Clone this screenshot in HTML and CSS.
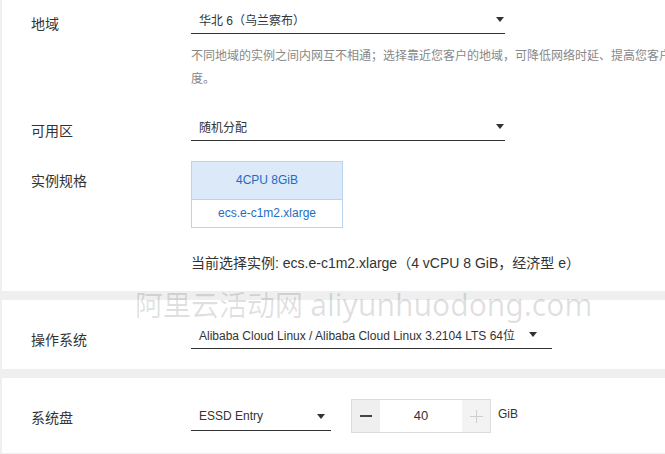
FILE: index.html
```html
<!DOCTYPE html>
<html lang="zh-CN">
<head>
<meta charset="utf-8">
<title>ECS</title>
<link rel="stylesheet" href="styles.css">
</head>
<body>
<div class="page">
  <section class="card card--first">
    <div class="row">
      <div class="label">地域</div>
      <div class="field">
        <div class="select select--region"><span>华北 6（乌兰察布）</span><i class="caret"></i></div>
        <p class="desc">不同地域的实例之间内网互不相通；选择靠近您客户的地域，可降低网络时延、提高您客户访问速度。</p>
      </div>
    </div>
    <div class="row row--zone">
      <div class="label">可用区</div>
      <div class="select select--region"><span>随机分配</span><i class="caret"></i></div>
    </div>
    <div class="row row--spec">
      <div class="label label--t10">实例规格</div>
      <div class="field">
        <div class="spec">
          <div class="spec-head">4CPU 8GiB</div>
          <div class="spec-body">ecs.e-c1m2.xlarge</div>
        </div>
        <p class="current">当前选择实例: ecs.e-c1m2.xlarge（4 vCPU 8 GiB，经济型 e）</p>
      </div>
    </div>
  </section>

  <section class="card card--os">
    <div class="row">
      <div class="label label--t10">操作系统</div>
      <div class="select select--os"><span>Alibaba Cloud Linux / Alibaba Cloud Linux 3.2104 LTS 64位</span><i class="caret caret--inline"></i></div>
    </div>
  </section>

  <section class="card card--disk">
    <div class="row">
      <div class="label">系统盘</div>
      <div class="select select--disk"><span>ESSD Entry</span><i class="caret"></i></div>
      <div class="stepper">
        <span class="step-btn"><i class="minus"></i></span>
        <span class="step-value">40</span>
        <span class="step-btn step-btn--off"><i class="plus"></i></span>
      </div>
      <span class="unit">GiB</span>
    </div>
  </section>

  <div class="watermark">阿里云活动网 <span class="watermark-latin">aliyunhuodong.com</span></div>
</div>
</body>
</html>
```

FILE: styles.css
```css
html, body {
  margin: 0;
  padding: 0;
  overflow: hidden;
}

body {
  background: #efefef;
  font-family: "Liberation Sans", "Noto Sans CJK SC", sans-serif;
  color: #333;
}

.page {
  position: relative;
  display: flex;
  flex-direction: column;
  gap: 9px;
  padding-left: 2px;
}

.card {
  background: #fff;
  padding-left: 29px;
}

.card--first {
  padding-top: 5px;
  padding-bottom: 18px;
}

.card--os {
  padding-top: 20px;
  padding-bottom: 19px;
}

.card--disk {
  padding-top: 21px;
  padding-bottom: 20px;
}

.row {
  display: flex;
  align-items: flex-start;
}

.row--zone {
  margin-top: 21px;
}

.row--spec {
  margin-top: 20px;
}

.label {
  flex: none;
  width: 160px;
  padding-top: 9px;
  font-size: 14px;
  line-height: 20px;
  color: #333;
}

.label--t10 {
  padding-top: 10px;
}

.field {
  display: flex;
  flex-direction: column;
}

.select {
  flex: none;
  box-sizing: border-box;
  height: 29px;
  display: flex;
  align-items: center;
  justify-content: space-between;
  border-bottom: 1px solid #333;
  padding-left: 8px;
  font-size: 12px;
  color: #333;
}

.select--region {
  width: 314px;
  padding-right: 1px;
}

.select--os {
  width: 361px;
  padding-right: 15px;
  justify-content: flex-start;
}

.select--disk {
  width: 140px;
  padding-right: 6px;
  margin-top: 3px;
}

.caret {
  display: block;
  width: 0;
  height: 0;
  border-left: 4px solid transparent;
  border-right: 4px solid transparent;
  border-top: 5px solid #333;
}

.caret--inline {
  margin-left: 14px;
}

.desc {
  margin: 11px 0 0;
  width: 530px;
  font-size: 12px;
  line-height: 23px;
  color: #888;
}

.spec {
  width: 152px;
  box-sizing: border-box;
  border: 1px solid #b9d4ee;
  font-size: 12px;
  color: #1f6cc0;
  text-align: center;
}

.spec-head {
  height: 37px;
  line-height: 37px;
  background: #dbe9f8;
  border-bottom: 1px solid #b9d4ee;
}

.spec-body {
  height: 27px;
  line-height: 27px;
  background: #fff;
}

.current {
  margin: 25px 0 0;
  font-size: 14px;
  line-height: 20px;
  color: #333;
  white-space: nowrap;
}

.stepper {
  flex: none;
  display: flex;
  box-sizing: border-box;
  width: 140px;
  height: 34px;
  margin-left: 20px;
  border: 1px solid #dcdcdc;
}

.step-btn {
  width: 28px;
  display: flex;
  align-items: center;
  justify-content: center;
  background: #efefef;
}

.step-btn--off {
  background: #f3f3f3;
}

.minus {
  display: block;
  width: 12px;
  height: 1.5px;
  background: #444;
}

.plus {
  position: relative;
  display: block;
  width: 13px;
  height: 13px;
}

.plus::before,
.plus::after {
  content: "";
  position: absolute;
  background: #cfcfcf;
}

.plus::before {
  left: 0;
  top: 6px;
  width: 13px;
  height: 1px;
}

.plus::after {
  left: 6px;
  top: 0;
  width: 1px;
  height: 13px;
}

.step-value {
  flex: 1;
  text-align: center;
  font-size: 13px;
  line-height: 32px;
  color: #333;
}

.unit {
  margin-left: 7px;
  font-size: 12px;
  line-height: 30px;
  color: #333;
}

.watermark {
  position: absolute;
  left: 135px;
  top: 289px;
  font-family: "Noto Sans", "Noto Sans CJK SC", sans-serif;
  font-size: 28px;
  line-height: 32px;
  color: rgba(0, 0, 0, 0.12);
  white-space: nowrap;
  pointer-events: none;
}

.watermark-latin {
  font-size: 30px;
}
```
